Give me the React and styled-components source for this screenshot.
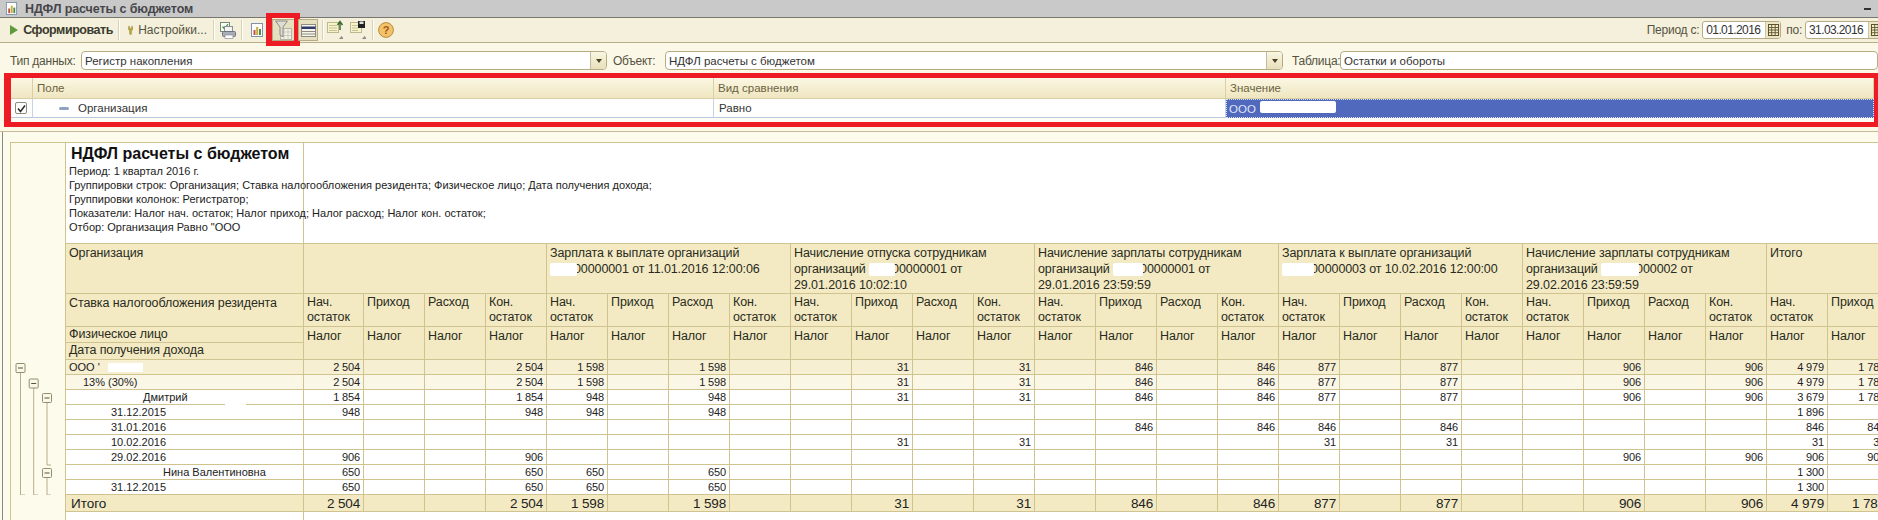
import styled, { createGlobalStyle } from "styled-components";

const GRID = "#cfc38f";
const HEAD_BG = "#f3eac4";

const Global = createGlobalStyle`
  html, body {
    margin: 0;
    padding: 0;
    background: #fdfbec;
  }
  body {
    font-family: "Liberation Sans", Arial, sans-serif;
    color: #222;
  }
`;

const Page = styled.div`
  width: 1878px;
  height: 520px;
  overflow: hidden;
  display: flex;
  flex-direction: column;
  background: #fdfbec;
`;

const TitleBar = styled.div`
  height: 17px;
  flex: none;
  display: flex;
  align-items: center;
  padding: 0 7px 0 5px;
  background: #c9c9c9;
  border-bottom: 1px solid #77776f;
`;

const TitleText = styled.div`
  margin-left: 7px;
  font-size: 12.5px;
  font-weight: 700;
  color: #46464a;
  letter-spacing: -0.1px;
`;

const Minimize = styled.div`
  margin-left: auto;
  width: 7px;
  height: 2px;
  background: #333;
`;

const Toolbar = styled.div`
  height: 24px;
  flex: none;
  display: flex;
  align-items: center;
  background: #f4f0dc;
  border-bottom: 1px solid #b8af88;
`;

const RunButton = styled.div`
  display: flex;
  align-items: center;
  gap: 5px;
  padding-left: 10px;
  width: 103px;
  font-size: 12.5px;
  font-weight: 700;
  color: #3a3a2e;
  letter-spacing: -0.45px;
  white-space: nowrap;
`;

const Sep = styled.div`
  width: 1px;
  height: 20px;
  margin-left: ${(p) => p.$ml}px;
  background: #d8d2b4;
  box-shadow: 1px 0 0 #fff;
`;

const SettingsButton = styled.div`
  display: flex;
  align-items: center;
  gap: 5px;
  width: 79px;
  margin-left: 9px;
  font-size: 12px;
  color: #55533f;
  white-space: nowrap;
`;

const ToolIcon = styled.div`
  margin-left: ${(p) => p.$ml}px;
  display: flex;
  align-items: center;
`;

const PressedButton = styled.div`
  position: relative;
  width: ${(p) => p.$w}px;
  height: 22px;
  margin-left: ${(p) => p.$ml}px;
  box-sizing: border-box;
  display: flex;
  align-items: center;
  justify-content: center;
  background: #e6dfc0;
  border: 1px solid #b5ac85;

  ${(p) =>
    p.$marked &&
    `&::after {
      content: "";
      position: absolute;
      left: -7px;
      right: -6px;
      top: -7px;
      bottom: -6px;
      border: solid #ed1c24;
      border-width: 5px 6px;
    }`}
`;

const Period = styled.div`
  margin-left: auto;
  margin-right: -6px;
  display: flex;
  align-items: center;
`;

const Label = styled.span`
  font-size: 12px;
  color: #55533f;
  white-space: nowrap;
  letter-spacing: -0.25px;
  margin-left: ${(p) => p.$ml || 0}px;
  width: ${(p) => (p.$w ? `${p.$w}px` : "auto")};
  flex: none;
`;

const DateField = styled.div`
  width: ${(p) => p.$w}px;
  height: 18px;
  margin-left: 3px;
  flex: none;
  box-sizing: border-box;
  display: flex;
  align-items: center;
  justify-content: space-between;
  padding-left: 3px;
  background: #fff;
  border: 1px solid #b5ac85;
  border-radius: 3px;
  font-size: 12px;
  color: #333;
  letter-spacing: -0.6px;
`;

const CalendarButton = styled.div`
  width: 14px;
  height: 16px;
  flex: none;
  display: flex;
  align-items: center;
  justify-content: center;
  background: #ece5c6;
  border-left: 1px solid #cfc7a2;
`;

const FilterArea = styled.div`
  height: 89px;
  flex: none;
  box-sizing: border-box;
  padding-top: 8px;
  background: #fbf8e8;
  border-bottom: 1px solid #c4bc98;
`;

const FieldsRow = styled.div`
  height: 19px;
  display: flex;
  align-items: center;
`;

const Field = styled.div`
  width: ${(p) => p.$w}px;
  height: 19px;
  margin-left: ${(p) => p.$ml}px;
  flex: none;
  box-sizing: border-box;
  display: flex;
  align-items: center;
  justify-content: space-between;
  padding-left: 3px;
  background: #fff;
  border: 1px solid #b5ac85;
  border-radius: 4px;
  font-size: 11.5px;
  color: #333;
`;

const DropButton = styled.div`
  width: 15px;
  height: 17px;
  flex: none;
  display: flex;
  align-items: center;
  justify-content: center;
  background: linear-gradient(#faf6e2, #e8dfba);
  border-left: 1px solid #c4bc98;
  border-radius: 0 3px 3px 0;

  &::before {
    content: "";
    border: solid transparent;
    border-width: 4px 3.5px 0;
    border-top-color: #4a4320;
  }
`;

const FilterBox = styled.div`
  margin: 3px 0 0 4px;
  height: 54px;
  box-sizing: border-box;
  border: solid #ed1c24;
  border-width: 5px 4px 5px 7px;
  background: #fdfcf4;
`;

const FilterGrid = styled.div`
  display: grid;
  grid-template-columns: 22px 681px 512px 1fr;
`;

const FilterHead = styled.div`
  height: 21px;
  box-sizing: border-box;
  padding: 0 4px;
  display: flex;
  align-items: center;
  font-size: 11.5px;
  color: #6b6340;
  background: linear-gradient(#fbf7e3, #efe6c0);
  border-right: 1px solid #d8cfa6;
  border-bottom: 1px solid #d8cfa6;
`;

const FilterCell = styled.div`
  height: 19px;
  box-sizing: border-box;
  display: flex;
  align-items: center;
  padding-left: 5px;
  font-size: 11.5px;
  color: #333;
  background: #fff;
  border-right: 1px solid #c6d3e6;
  border-bottom: 1px solid #b9c8e0;
`;

const FieldCell = styled(FilterCell)`
  padding-left: 26px;
  gap: 9px;
`;

const CheckCell = styled(FilterCell)`
  padding-left: 4px;
`;

const Checkbox = styled.div`
  width: 12px;
  height: 12px;
  box-sizing: border-box;
  border: 1px solid #8b8b80;
  border-radius: 2px;
  background: #fdfdfd;
  display: flex;
  align-items: center;
  justify-content: center;
`;

const Dash = styled.div`
  width: 10px;
  height: 3px;
  border-radius: 2px;
  background: #8ea3bd;
`;

const SelectedCell = styled(FilterCell)`
  position: relative;
  color: #dfe4f7;
  background: #5169bd;
  border: 1px dotted #dbe2f3;
  padding-left: 2px;
`;

const SelectedMask = styled.div`
  position: absolute;
  left: 33px;
  top: 1px;
  width: 76px;
  height: 12px;
  background: #fff;
  border-radius: 2px;
`;

const Doc = styled.div`
  flex: 1;
  min-height: 0;
  margin: 0 0 0 2px;
  padding: 10px 0 0 7px;
  overflow: hidden;
  border-left: 1px solid #8a8a84;
`;

const Sheet = styled.table`
  table-layout: fixed;
  border-collapse: collapse;
  background: #fff;
  font-size: 11.5px;
  color: #222;

  td {
    padding: 0;
    overflow: visible;
  }
`;

const Row = styled.tr`
  height: ${(p) => p.$h}px;
`;

const Gutter = styled.td`
  background: #fdfbec;
  border: 1px solid ${GRID};
  border-width: ${(p) => (p.$top ? "1px" : "0")} 1px 0 1px;
  vertical-align: top;
  line-height: 0;
`;

const ReportHead = styled.td`
  border-top: 1px solid ${GRID};
  border-bottom: 1px solid ${GRID};
  border-right: 1px solid ${GRID};
  vertical-align: top;
  padding: 1px 0 0 3px !important;
  background: transparent;
`;

const ReportRest = styled.td`
  border-top: 1px solid ${GRID};
  border-bottom: 1px solid ${GRID};
  background: transparent;
`;

const ReportTitle = styled.div`
  margin: 0 0 1px 2px;
  font-size: 16px;
  line-height: 19px;
  font-weight: 700;
  color: #111;
  white-space: nowrap;
`;

const ReportLine = styled.div`
  font-size: 11px;
  line-height: 14px;
  color: #222;
  white-space: nowrap;
`;

const Head = styled.td`
  background: ${HEAD_BG};
  border: 1px solid ${GRID};
  vertical-align: top;
  box-sizing: border-box;
  padding: ${(p) => p.$pt ?? 1}px 0 0 3px !important;
  font-size: 12.5px;
  line-height: ${(p) => p.$lh || 15}px;
  color: #2a2a20;
  letter-spacing: -0.1px;
`;

const Mask = styled.span`
  position: relative;
  display: inline-block;
  width: ${(p) => p.$w}px;
  height: 13px;
  margin-right: -3px;
  vertical-align: -3px;
  background: #fff;
  border-radius: 2px;
`;

const rowBg = { org: "#f6efd2", rate: "#fbf7e6", plain: "#fff", total: HEAD_BG };

const NameCell = styled.td`
  position: relative;
  background: ${(p) => rowBg[p.$kind]};
  border: 1px solid ${GRID};
  padding-top: 1px !important;
  padding-left: ${(p) => p.$indent}px !important;
  font-size: ${(p) => (p.$kind === "total" ? 13.5 : 11)}px;
  line-height: 13px;
  white-space: nowrap;
`;

const Num = styled.td`
  background: ${(p) => rowBg[p.$kind]};
  border: 1px solid ${GRID};
  padding-top: 1px !important;
  padding-right: 3px !important;
  text-align: right;
  font-size: ${(p) => (p.$kind === "total" ? 13.5 : 11)}px;
  line-height: 13px;
  white-space: nowrap;
  letter-spacing: -0.15px;
`;

const NameMask = styled.span`
  display: inline-block;
  width: 35px;
  height: 9px;
  margin-left: 8px;
  vertical-align: -1px;
  background: #fff;
`;

const BorderGap = styled.span`
  position: absolute;
  left: 159px;
  bottom: -2px;
  width: 21px;
  height: 3px;
  background: #fff;
`;

const TailCell = styled.td`
  border-right: 1px solid ${GRID};
`;

// toolbar drawings
const ReportIcon = ({ s = 14 }) => (
  <svg width={s} height={s} viewBox="0 0 14 14">
    <rect x="1.5" y="0.5" width="11" height="13" fill="#fff" stroke="#7f93ad" />
    <rect x="3.5" y="7" width="2" height="5" fill="#c2503a" />
    <rect x="6.2" y="4" width="2" height="8" fill="#c9a93a" />
    <rect x="9" y="6" width="2" height="6" fill="#4e8a4e" />
  </svg>
);

const PlayIcon = () => (
  <svg width="10" height="12" viewBox="0 0 10 12">
    <polygon points="0,0 10,6 0,12" fill="#5f9a3c" />
  </svg>
);

const WrenchIcon = () => (
  <svg width="10" height="17" viewBox="0 0 10 17">
    <path d="M0.5 1 L3 0 L3 4 L7 4 L7 0 L9.5 1 L9.5 5 C9.5 7 7.5 8 7 9 L7 15 C7 17 3 17 3 15 L3 9 C2.5 8 0.5 7 0.5 5 Z" fill="#b9a63a" stroke="#6e6a2a" strokeWidth="0.5" />
  </svg>
);

const PrintIcon = () => (
  <svg width="16" height="17" viewBox="0 0 16 17">
    <rect x="0.5" y="0.5" width="9" height="9" fill="#fff" stroke="#6f8f6f" />
    <path d="M2.5 4.5 L4.5 7 L8 2" fill="none" stroke="#3f9a3f" strokeWidth="1.3" />
    <rect x="4.5" y="4.5" width="8" height="5" fill="#f4f4f0" stroke="#8a8f98" />
    <rect x="2.5" y="9.5" width="13" height="5" rx="1" fill="#a9aeb5" stroke="#6f747c" />
    <rect x="5" y="13" width="8" height="3.5" fill="#fff" stroke="#8a8f98" strokeWidth="0.7" />
  </svg>
);

const FilterIcon = () => (
  <svg width="17" height="20" viewBox="0 0 17 20">
    <rect x="5.5" y="8.5" width="11" height="11" fill="#f3f1e6" stroke="#b4b2a2" />
    <path d="M5.5 12 H16.5 M5.5 15.5 H16.5 M9 8.5 V19.5 M13 8.5 V19.5" stroke="#c4c2b4" strokeWidth="0.8" />
    <path d="M0.5 1 H12.5 L8 7 V17 L5 15 V7 Z" fill="#ddddd4" stroke="#8c8c84" />
  </svg>
);

const TableIcon = () => (
  <svg width="15" height="13" viewBox="0 0 15 13">
    <rect x="0.5" y="0.5" width="14" height="12" fill="#f7f5ea" stroke="#8c8c84" />
    <rect x="0.5" y="2.5" width="14" height="2.5" fill="#2d3a6e" />
    <path d="M1 7.5 H14 M1 10 H14" stroke="#8c8c84" />
  </svg>
);

const Caret = () => <polygon points="12,19 14.5,16 17,19" fill="#8d8d84" />;

const ExportIcon = () => (
  <svg width="16" height="20" viewBox="0 0 16 20">
    <rect x="0.5" y="2.5" width="11" height="10" fill="#f8f4c8" stroke="#bdb88e" />
    <path d="M2 5.5 H10 M2 8 H10 M2 10.5 H10" stroke="#b8b48e" strokeWidth="0.8" />
    <path d="M13 10 V3 M10.5 5 L13 1.5 L15.5 5" fill="none" stroke="#3d6a2f" strokeWidth="1.5" />
    <Caret />
  </svg>
);

const SaveIcon = () => (
  <svg width="16" height="20" viewBox="0 0 16 20">
    <rect x="0.5" y="2.5" width="11" height="10" fill="#f8f4c8" stroke="#bdb88e" />
    <path d="M2 5.5 H8 M2 8 H8 M2 10.5 H8" stroke="#b8b48e" strokeWidth="0.8" />
    <rect x="8" y="1" width="7" height="7" fill="#222" />
    <rect x="9.5" y="1.5" width="4" height="2.5" fill="#dfdfdf" />
    <Caret />
  </svg>
);

const HelpIcon = () => (
  <svg width="16" height="16" viewBox="0 0 16 16">
    <circle cx="8" cy="8" r="7.4" fill="#f4c26a" stroke="#b88a3a" />
    <text x="8" y="12" fontSize="11" fontWeight="700" textAnchor="middle" fontFamily="Liberation Sans" fill="#9a5a12">?</text>
  </svg>
);

const CalendarIcon = () => (
  <svg width="11" height="12" viewBox="0 0 11 12">
    <rect x="0.5" y="0.5" width="10" height="11" fill="#f2ecd0" stroke="#5d5228" />
    <path d="M0.5 3.5 H10.5 M0.5 6 H10.5 M0.5 8.7 H10.5 M3.7 0.5 V11.5 M7.2 0.5 V11.5" stroke="#5d5228" strokeWidth="0.9" />
  </svg>
);

const CheckMark = () => (
  <svg width="9" height="9" viewBox="0 0 9 9">
    <path d="M1 4.5 L3.5 7.5 L8 1.5" fill="none" stroke="#2c2c2c" strokeWidth="1.5" />
  </svg>
);

const treeBoxes = [
  [9.5, 8],
  [22.7, 23.5],
  [36, 38],
  [36, 113],
];

const treeLines = [
  "M9.5 12 V135 H14",
  "M22.7 28 V135 H27",
  "M36 42.5 V105 H40",
  "M36 117.5 V135 H40",
];

const TreeIcon = () => (
  <svg width="54" height="135" viewBox="0 0 54 135">
    {treeLines.map((d) => (
      <path key={d} d={d} fill="none" stroke="#b5ae8c" />
    ))}
    {treeBoxes.map(([cx, cy]) => (
      <g key={`${cx}-${cy}`}>
        <rect x={cx - 4.5} y={cy - 4.5} width="9" height="9" rx="1" fill="#fbf8e6" stroke="#928c70" />
        <path d={`M${cx - 2.5} ${cy} H${cx + 2.5}`} stroke="#55523f" />
      </g>
    ))}
  </svg>
);

const COUNT = 26;
const colWidth = (c) => (c === 0 ? 60 : 61);

const groups = [
  { span: 4, body: null },
  { span: 4, body: <>Зарплата к выплате организаций<br /><Mask $w={27} />00000001 от 11.01.2016 12:00:06</> },
  { span: 4, body: <>Начисление отпуска сотрудникам<br />организаций <Mask $w={26} />00000001 от<br />29.01.2016 10:02:10</> },
  { span: 4, body: <>Начисление зарплаты сотрудникам<br />организаций <Mask $w={30} />00000001 от<br />29.01.2016 23:59:59</> },
  { span: 4, body: <>Зарплата к выплате организаций<br /><Mask $w={32} />00000003 от 10.02.2016 12:00:00</> },
  { span: 4, body: <>Начисление зарплаты сотрудникам<br />организаций <Mask $w={38} />000002 от<br />29.02.2016 23:59:59</> },
  { span: 2, body: "Итого" },
];

const measures = [<>Нач.<br />остаток</>, "Приход", "Расход", <>Кон.<br />остаток</>];

const orgVals = ["2 504", "", "", "2 504", "1 598", "", "1 598", "", "", "31", "", "31", "", "846", "", "846", "877", "", "877", "", "", "906", "", "906", "4 979", "1 783"];

const rows = [
  { name: "ООО '", kind: "org", indent: 3, mask: true, vals: orgVals },
  { name: "13% (30%)", kind: "rate", indent: 17, vals: orgVals },
  { name: "Дмитрий", kind: "plain", indent: 77, gap: true, vals: ["1 854", "", "", "1 854", "948", "", "948", "", "", "31", "", "31", "", "846", "", "846", "877", "", "877", "", "", "906", "", "906", "3 679", "1 783"] },
  { name: "31.12.2015", kind: "plain", indent: 45, vals: ["948", "", "", "948", "948", "", "948", "", "", "", "", "", "", "", "", "", "", "", "", "", "", "", "", "", "1 896", ""] },
  { name: "31.01.2016", kind: "plain", indent: 45, vals: ["", "", "", "", "", "", "", "", "", "", "", "", "", "846", "", "846", "846", "", "846", "", "", "", "", "", "846", "846"] },
  { name: "10.02.2016", kind: "plain", indent: 45, vals: ["", "", "", "", "", "", "", "", "", "31", "", "31", "", "", "", "", "31", "", "31", "", "", "", "", "", "31", "31"] },
  { name: "29.02.2016", kind: "plain", indent: 45, vals: ["906", "", "", "906", "", "", "", "", "", "", "", "", "", "", "", "", "", "", "", "", "", "906", "", "906", "906", "906"] },
  { name: "Нина Валентиновна", kind: "plain", indent: 97, vals: ["650", "", "", "650", "650", "", "650", "", "", "", "", "", "", "", "", "", "", "", "", "", "", "", "", "", "1 300", ""] },
  { name: "31.12.2015", kind: "plain", indent: 45, vals: ["650", "", "", "650", "650", "", "650", "", "", "", "", "", "", "", "", "", "", "", "", "", "", "", "", "", "1 300", ""] },
];

const totalVals = ["2 504", "", "", "2 504", "1 598", "", "1 598", "", "", "31", "", "31", "", "846", "", "846", "877", "", "877", "", "", "906", "", "906", "4 979", "1 783"];

function App() {
  const cols = Array.from({ length: COUNT }, (_, i) => i);
  const sheetWidth = cols.reduce((sum, c) => sum + colWidth(c), 55 + 238);

  return (
    <>
      <Global />
      <Page>
        <TitleBar>
          <ReportIcon s={13} />
          <TitleText>НДФЛ расчеты с бюджетом</TitleText>
          <Minimize />
        </TitleBar>

        <Toolbar>
          <RunButton>
            <PlayIcon />
            Сформировать
          </RunButton>
          <Sep $ml={5} />
          <SettingsButton>
            <WrenchIcon />
            Настройки...
          </SettingsButton>
          <Sep $ml={6} />
          <ToolIcon $ml={6}>
            <PrintIcon />
          </ToolIcon>
          <Sep $ml={5} />
          <ToolIcon $ml={8}>
            <ReportIcon />
          </ToolIcon>
          <PressedButton $w={23} $ml={8} $marked>
            <FilterIcon />
          </PressedButton>
          <PressedButton $w={20} $ml={3}>
            <TableIcon />
          </PressedButton>
          <Sep $ml={4} />
          <ToolIcon $ml={4}>
            <ExportIcon />
          </ToolIcon>
          <ToolIcon $ml={7}>
            <SaveIcon />
          </ToolIcon>
          <Sep $ml={6} />
          <ToolIcon $ml={5}>
            <HelpIcon />
          </ToolIcon>

          <Period>
            <Label>Период с:</Label>
            <DateField $w={79}>
              01.01.2016
              <CalendarButton>
                <CalendarIcon />
              </CalendarButton>
            </DateField>
            <Label $ml={5}>по:</Label>
            <DateField $w={79}>
              31.03.2016
              <CalendarButton>
                <CalendarIcon />
              </CalendarButton>
            </DateField>
          </Period>
        </Toolbar>

        <FilterArea>
          <FieldsRow>
            <Label $ml={10} $w={62}>
              Тип данных:
            </Label>
            <Field $w={526} $ml={9}>
              Регистр накопления
              <DropButton />
            </Field>
            <Label $ml={6} $w={46}>
              Объект:
            </Label>
            <Field $w={618} $ml={6}>
              НДФЛ расчеты с бюджетом
              <DropButton />
            </Field>
            <Label $ml={9} $w={47}>
              Таблица:
            </Label>
            <Field $w={538} $ml={1}>
              Остатки и обороты
            </Field>
          </FieldsRow>

          <FilterBox>
            <FilterGrid>
              <FilterHead />
              <FilterHead>Поле</FilterHead>
              <FilterHead>Вид сравнения</FilterHead>
              <FilterHead>Значение</FilterHead>
              <CheckCell>
                <Checkbox>
                  <CheckMark />
                </Checkbox>
              </CheckCell>
              <FieldCell>
                <Dash />
                Организация
              </FieldCell>
              <FilterCell>Равно</FilterCell>
              <SelectedCell>
                ООО
                <SelectedMask />
              </SelectedCell>
            </FilterGrid>
          </FilterBox>
        </FilterArea>

        <Doc>
          <Sheet style={{ width: sheetWidth }}>
            <colgroup>
              <col style={{ width: 55 }} />
              <col style={{ width: 238 }} />
              {cols.map((c) => (
                <col key={c} style={{ width: colWidth(c) }} />
              ))}
            </colgroup>
            <tbody>
              <Row $h={101}>
                <Gutter rowSpan={5} $top />
                <ReportHead>
                  <ReportTitle>НДФЛ расчеты с бюджетом</ReportTitle>
                  <ReportLine>Период: 1 квартал 2016 г.</ReportLine>
                  <ReportLine>
                    Группировки строк: Организация; Ставка налогообложения резидента; Физическое лицо; Дата получения дохода;
                  </ReportLine>
                  <ReportLine>Группировки колонок: Регистратор;</ReportLine>
                  <ReportLine>Показатели: Налог нач. остаток; Налог приход; Налог расход; Налог кон. остаток;</ReportLine>
                  <ReportLine>Отбор: Организация Равно "ООО</ReportLine>
                </ReportHead>
                <ReportRest colSpan={COUNT} />
              </Row>

              <Row $h={50}>
                <Head $lh={16}>Организация</Head>
                {groups.map((g, i) => (
                  <Head key={i} colSpan={g.span} $lh={16}>
                    {g.body}
                  </Head>
                ))}
              </Row>

              <Row $h={33}>
                <Head $pt={2}>Ставка налогообложения резидента</Head>
                {cols.map((c) => (
                  <Head key={c} $pt={1}>
                    {measures[c % 4]}
                  </Head>
                ))}
              </Row>

              <Row $h={16}>
                <Head $pt={0}>Физическое лицо</Head>
                {cols.map((c) => (
                  <Head key={c} rowSpan={2} $pt={2}>
                    Налог
                  </Head>
                ))}
              </Row>

              <Row $h={17}>
                <Head $pt={0}>Дата получения дохода</Head>
              </Row>

              {rows.map((r, i) => (
                <Row key={i} $h={15}>
                  {i === 0 && (
                    <Gutter rowSpan={rows.length}>
                      <TreeIcon />
                    </Gutter>
                  )}
                  <NameCell $kind={r.kind} $indent={r.indent}>
                    {r.name}
                    {r.mask && <NameMask />}
                    {r.gap && <BorderGap />}
                  </NameCell>
                  {r.vals.map((v, c) => (
                    <Num key={c} $kind={r.kind}>
                      {v}
                    </Num>
                  ))}
                </Row>
              ))}

              <Row $h={17}>
                <Gutter rowSpan={2} />
                <NameCell $kind="total" $indent={5}>
                  Итого
                </NameCell>
                {totalVals.map((v, c) => (
                  <Num key={c} $kind="total">
                    {v}
                  </Num>
                ))}
              </Row>

              <Row $h={10}>
                <TailCell />
              </Row>
            </tbody>
          </Sheet>
        </Doc>
      </Page>
    </>
  );
}

export default App;
